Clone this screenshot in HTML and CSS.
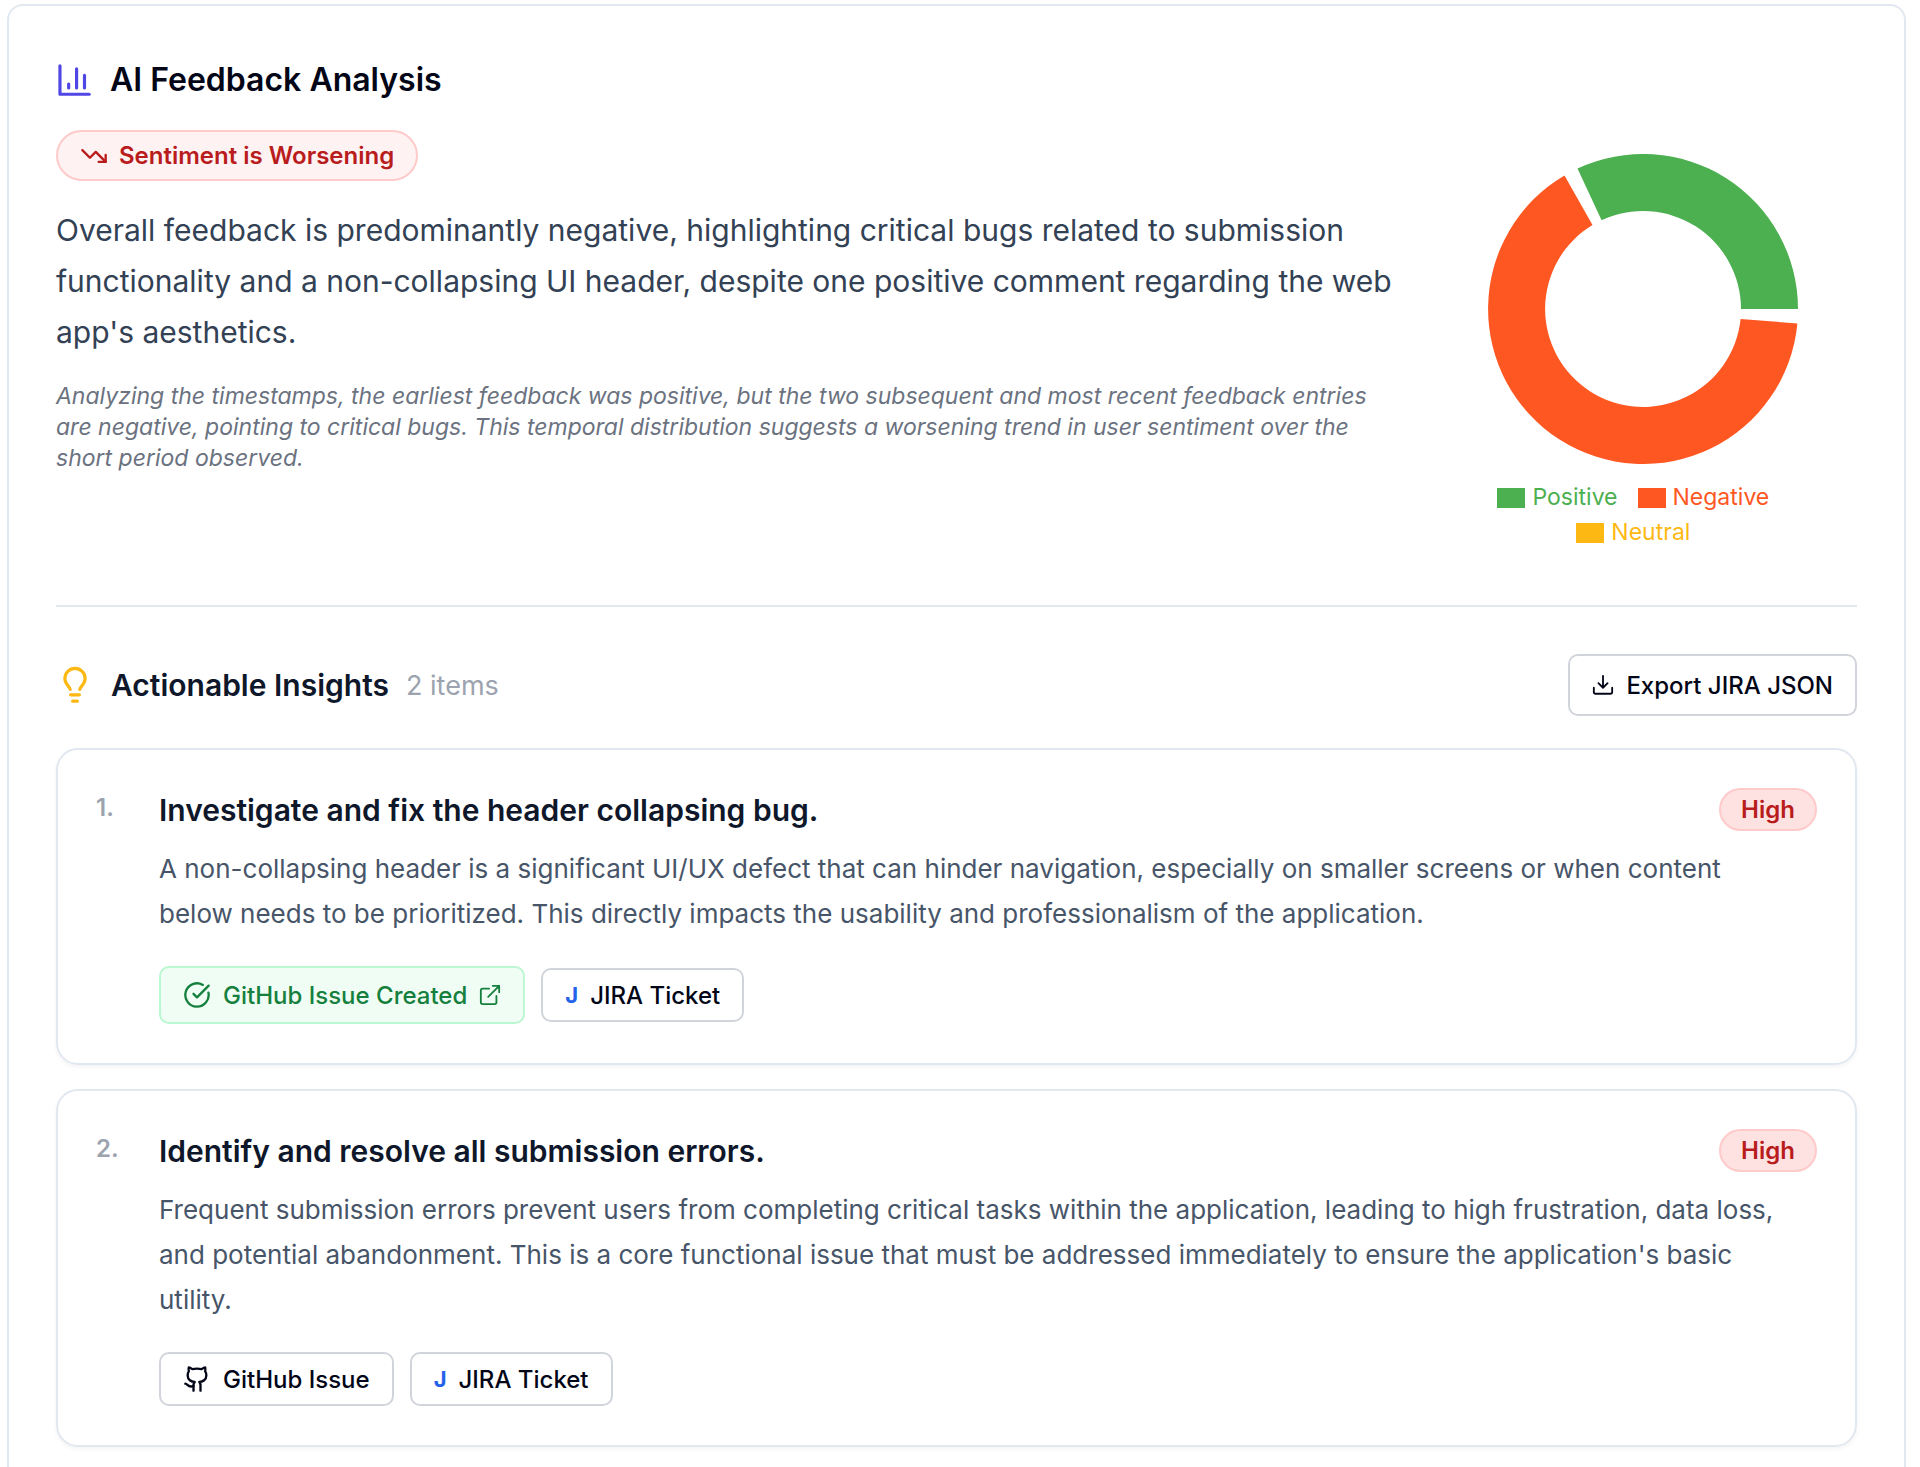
FILE: index.html
```
<!DOCTYPE html>
<html lang="en">
<head>
    <meta charset="UTF-8">
    <meta name="viewport" content="width=device-width, initial-scale=1">
    <title>AI Feedback Analysis</title>
    <link rel="stylesheet" href="styles.css">
</head>
<body>
    <main class="panel">
        <section class="overview">
            <div class="summary">
                <h1 class="panel-title">
                    <svg class="icon icon-lg icon-chart" viewBox="0 0 24 24"><path d="M2.500 3v18H21M8 17v-2.500M13 17V5M18 17V9"/></svg>
                    AI Feedback Analysis
                </h1>
                <div class="trend">
                    <svg class="icon icon-md" viewBox="0 0 24 24"><path d="M22 17l-8.500-8.500-5 5L2 7"/><path d="M16 17h6v-6"/></svg>
                    Sentiment is Worsening
                </div>
                <p class="lead">Overall feedback is predominantly negative, highlighting critical bugs related to submission functionality and a non-collapsing UI header, despite one positive comment regarding the web app's aesthetics.</p>
                <p class="note">Analyzing the timestamps, the earliest feedback was positive, but the two subsequent and most recent feedback entries are negative, pointing to critical bugs. This temporal distribution suggests a worsening trend in user sentiment over the short period observed.</p>
            </div>
            <div class="chart">
                <svg class="donut" viewBox="-155 -155 310 310" role="img" aria-label="Sentiment breakdown">
                    <path fill="#4caf50" d="M155 0A155 155 0 0 0 -65.500 -140.500L-41.400 -88.800A98 98 0 0 1 98 0Z"/>
                    <path fill="#ff5722" d="M-78.500 -133.600A155 155 0 1 0 154.400 14.500L97.600 10A98 98 0 1 1 -50.500 -84Z"/>
                </svg>
                <ul class="legend">
                    <li class="legend-item positive">Positive</li>
                    <li class="legend-item negative">Negative</li>
                    <li class="legend-item neutral">Neutral</li>
                </ul>
            </div>
        </section>

        <section class="insights">
            <div class="insights-head">
                <h2 class="insights-title">
                    <svg class="icon icon-lg icon-bulb" viewBox="0 0 24 24"><path d="M9 14.800c-.3-1.800-3.400-3.400-3.400-6.900a6.400 6.400 0 0 1 12.800 0c0 3.500-3.100 5.100-3.400 6.900M9.200 18.200h5.600M10.500 22.200h3"/></svg>
                    Actionable Insights
                    <span class="count">2 items</span>
                </h2>
                <button type="button" class="btn btn-lg">
                    <svg class="icon icon-sm" viewBox="0 0 24 24"><path d="M12 2v13M7 10l5 5 5-5M2 15v4.500a2 2 0 0 0 2 2h16a2 2 0 0 0 2-2V15"/></svg>
                    Export JIRA JSON
                </button>
            </div>

            <article class="insight">
                <span class="number">1.</span>
                <div class="insight-body">
                    <div class="insight-head">
                        <h3 class="insight-title">Investigate and fix the header collapsing bug.</h3>
                        <span class="priority">High</span>
                    </div>
                    <p class="description">A non-collapsing header is a significant UI/UX defect that can hinder navigation, especially on smaller screens or when content below needs to be prioritized. This directly impacts the usability and professionalism of the application.</p>
                    <div class="actions">
                        <a class="btn btn-created" href="#">
                            <svg class="icon icon-md" viewBox="0 0 24 24"><path d="M21.800 10A10 10 0 1 1 17 3.340"/><path d="M9 11l3 3L22 4"/></svg>
                            GitHub Issue Created
                            <svg class="icon icon-sm" viewBox="0 0 24 24"><path d="M15 2h7v7M10 14L22 2M19 13v7a2 2 0 0 1-2 2H4a2 2 0 0 1-2-2V7a2 2 0 0 1 2-2h7"/></svg>
                        </a>
                        <button type="button" class="btn"><span class="jira">J</span>JIRA Ticket</button>
                    </div>
                </div>
            </article>

            <article class="insight">
                <span class="number">2.</span>
                <div class="insight-body">
                    <div class="insight-head">
                        <h3 class="insight-title">Identify and resolve all submission errors.</h3>
                        <span class="priority">High</span>
                    </div>
                    <p class="description">Frequent submission errors prevent users from completing critical tasks within the application, leading to high frustration, data loss, and potential abandonment. This is a core functional issue that must be addressed immediately to ensure the application's basic utility.</p>
                    <div class="actions">
                        <button type="button" class="btn">
                            <svg class="icon icon-md" viewBox="0 0 24 24"><path d="M15 22v-4a4.800 4.800 0 0 0-1-3.500c3 0 6-2 6-5.500.08-1.250-.27-2.480-1-3.500.28-1.150.28-2.350 0-3.500 0 0-1 0-3 1.500-2.640-.5-5.360-.5-8 0C6 2 5 2 5 2c-.3 1.150-.3 2.350 0 3.500A5.400 5.400 0 0 0 4 9c0 3.500 3 5.500 6 5.500-.39.490-.68 1.050-.85 1.650-.17.600-.22 1.230-.15 1.850v4"/><path d="M9 18c-4.510 2-5-2-7-2"/></svg>
                            GitHub Issue
                        </button>
                        <button type="button" class="btn"><span class="jira">J</span>JIRA Ticket</button>
                    </div>
                </div>
            </article>
        </section>
    </main>
</body>
</html>
```

FILE: styles.css
```
* {
    box-sizing: border-box;
}
body {
    margin: 0;
    padding: 4px 14px 0 7px;
    background: #fff;
    color: #020617;
    font-family: Inter, "Liberation Sans", sans-serif;
    font-size: 24px;
}
h1, h2, h3, p, ul {
    margin: 0;
    padding: 0;
}
.panel {
    padding: 48px 47px;
    border: 2px solid #e2e8f0;
    border-radius: 16px;
}
.icon {
    flex: none;
    fill: none;
    stroke: currentColor;
    stroke-width: 2;
    stroke-linecap: round;
    stroke-linejoin: round;
}
.icon-lg {
    width: 38px;
    height: 38px;
}
.icon-md {
    width: 28px;
    height: 28px;
}
.icon-sm {
    width: 22px;
    height: 22px;
}
.icon-chart {
    color: #4f46e5;
}
.icon-bulb {
    color: #fdb813;
}

/* Overview */
.overview {
    display: grid;
    grid-template-columns: 3fr 1fr;
    gap: 12px;
    padding-bottom: 55px;
    border-bottom: 2px solid #e2e8f0;
}
.panel-title {
    display: flex;
    align-items: center;
    gap: 16px;
    margin-bottom: 24px;
    font-size: 32px;
    font-weight: 600;
    line-height: 52px;
}
.trend {
    display: inline-flex;
    align-items: center;
    gap: 11px;
    margin-bottom: 24px;
    padding: 8px 22px;
    border: 2px solid #fecaca;
    border-radius: 26px;
    background: #fef2f2;
    color: #b91c1c;
    font-weight: 600;
    line-height: 31px;
}
.lead {
    margin-bottom: 23px;
    color: #334155;
    font-size: 30px;
    line-height: 51px;
}
.note {
    color: #6b7280;
    font-size: 23px;
    font-style: italic;
    line-height: 31px;
}
.chart {
    display: flex;
    flex-direction: column;
    align-items: center;
    padding-top: 100px;
}
.donut {
    width: 310px;
    margin-left: 20px;
}
.legend {
    display: flex;
    flex-wrap: wrap;
    justify-content: center;
    column-gap: 20px;
    width: 310px;
    margin-top: 16px;
    list-style: none;
    font-size: 23px;
    line-height: 35px;
}
.legend-item {
    display: flex;
    align-items: center;
    gap: 7px;
}
.legend-item::before {
    content: "";
    width: 28px;
    height: 20px;
    background: currentColor;
}
.positive {
    color: #4caf50;
}
.negative {
    color: #ff5722;
}
.neutral {
    color: #fdb813;
}

/* Insights */
.insights {
    padding-top: 47px;
}
.insights-head {
    display: flex;
    align-items: center;
    justify-content: space-between;
    margin-bottom: 32px;
}
.insights-title {
    display: flex;
    align-items: center;
    gap: 17px;
    color: #0f172a;
    font-size: 30px;
    font-weight: 600;
}
.count {
    color: #9ca3af;
    font-size: 27px;
    font-weight: 400;
}
.btn {
    display: inline-flex;
    align-items: center;
    gap: 12px;
    height: 54px;
    padding: 0 22px;
    border: 2px solid #d1d5db;
    border-radius: 10px;
    background: #fff;
    color: #020617;
    font-family: inherit;
    font-size: 24px;
    font-weight: 500;
    text-decoration: none;
    cursor: pointer;
}
.btn-lg {
    height: 62px;
}
.btn-created {
    height: 58px;
    border-color: #bbf7d0;
    background: #f0fdf4;
    color: #15803d;
}
.jira {
    color: #2563eb;
    font-size: 22px;
    font-weight: 700;
}
.insight {
    display: flex;
    margin-bottom: 24px;
    padding: 38px;
    border: 2px solid #e2e8f0;
    border-radius: 22px;
    box-shadow: 0 2px 4px rgba(0, 0, 0, 0.05);
}
.insight:last-child {
    margin-bottom: 0;
}
.number {
    flex: none;
    width: 63px;
    color: #9ca3af;
    font-weight: 600;
    line-height: 40px;
}
.insight-body {
    flex: 1;
}
.insight-head {
    display: flex;
    align-items: center;
    justify-content: space-between;
    margin-bottom: 15px;
}
.insight-title {
    color: #0f172a;
    font-size: 30px;
    font-weight: 600;
}
.priority {
    padding: 4px 20px;
    border: 2px solid #fecaca;
    border-radius: 22px;
    background: #fee2e2;
    color: #b91c1c;
    font-weight: 600;
    line-height: 31px;
}
.description {
    margin-bottom: 30px;
    padding-right: 16px;
    color: #475569;
    font-size: 26px;
    line-height: 45px;
}
.actions {
    display: flex;
    align-items: center;
    gap: 16px;
    margin-bottom: 1px;
}
```
